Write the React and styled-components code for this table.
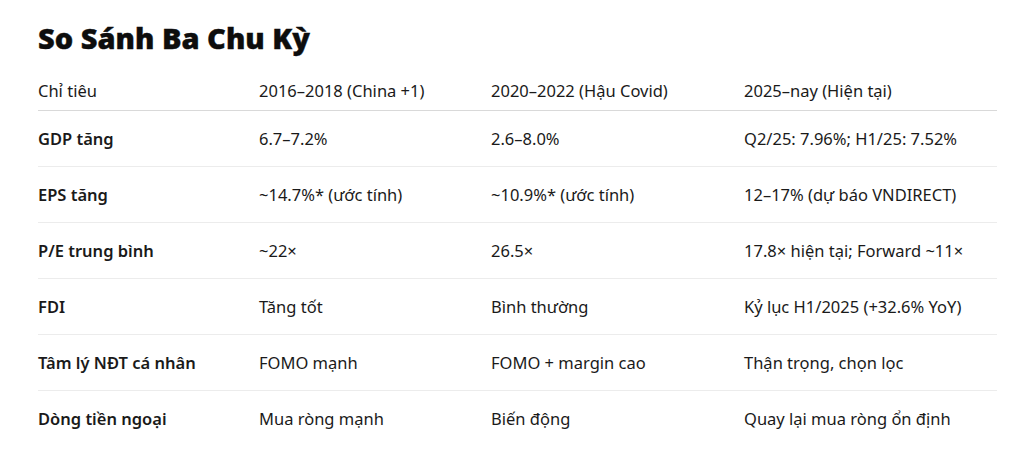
import React from 'react'
import { styled, createGlobalStyle } from 'styled-components'

const Global = createGlobalStyle`
  body {
    margin: 0;
    background: #fff;
    font-family: "Noto Sans", "Open Sans", sans-serif;
    color: #111;
  }
`

const Page = styled.div`
  padding: 20px 31px 0 38px;
`

const Title = styled.h1`
  margin: 0;
  font-size: 29px;
  line-height: 36px;
  font-weight: 900;
  color: #0d0d0d;
  -webkit-text-stroke: 0.4px #0d0d0d;
`

const Table = styled.table`
  margin-top: 15px;
  width: 959px;
  border-collapse: collapse;
  table-layout: fixed;
  font-size: 16.5px;
`

const Col = styled.col`
  width: ${p => p.$w}px;
`

const Th = styled.th`
  text-align: left;
  font-weight: 400;
  padding: 8px 0 7px;
  line-height: 24px;
  border-bottom: 1px solid #d9d9d9;
  color: #1a1a1a;
`

const Td = styled.td`
  padding: 16px 0 15px;
  line-height: 24px;
  border-bottom: ${p => (p.$last ? 'none' : '1px solid #ececec')};
  font-weight: ${p => (p.$label ? 600 : 400)};
  color: #1a1a1a;
  white-space: nowrap;
`

const head = ['Chỉ tiêu', '2016–2018 (China +1)', '2020–2022 (Hậu Covid)', '2025–nay (Hiện tại)']

const rows = [
  ['GDP tăng', '6.7–7.2%', '2.6–8.0%', 'Q2/25: 7.96%; H1/25: 7.52%'],
  ['EPS tăng', '~14.7%* (ước tính)', '~10.9%* (ước tính)', '12–17% (dự báo VNDIRECT)'],
  ['P/E trung bình', '~22×', '26.5×', '17.8× hiện tại; Forward ~11×'],
  ['FDI', 'Tăng tốt', 'Bình thường', 'Kỷ lục H1/2025 (+32.6% YoY)'],
  ['Tâm lý NĐT cá nhân', 'FOMO mạnh', 'FOMO + margin cao', 'Thận trọng, chọn lọc'],
  ['Dòng tiền ngoại', 'Mua ròng mạnh', 'Biến động', 'Quay lại mua ròng ổn định'],
]

const widths = [221, 232, 253, 253]

export default function App() {
  return (
    <Page>
      <Global />
      <Title>So Sánh Ba Chu Kỳ</Title>
      <Table>
        <colgroup>
          {widths.map((w, i) => <Col key={i} $w={w} />)}
        </colgroup>
        <thead>
          <tr>
            {head.map(h => <Th key={h}>{h}</Th>)}
          </tr>
        </thead>
        <tbody>
          {rows.map((r, ri) => (
            <tr key={ri}>
              {r.map((c, ci) => (
                <Td key={ci} $label={ci === 0} $last={ri === rows.length - 1}>{c}</Td>
              ))}
            </tr>
          ))}
        </tbody>
      </Table>
    </Page>
  )
}
